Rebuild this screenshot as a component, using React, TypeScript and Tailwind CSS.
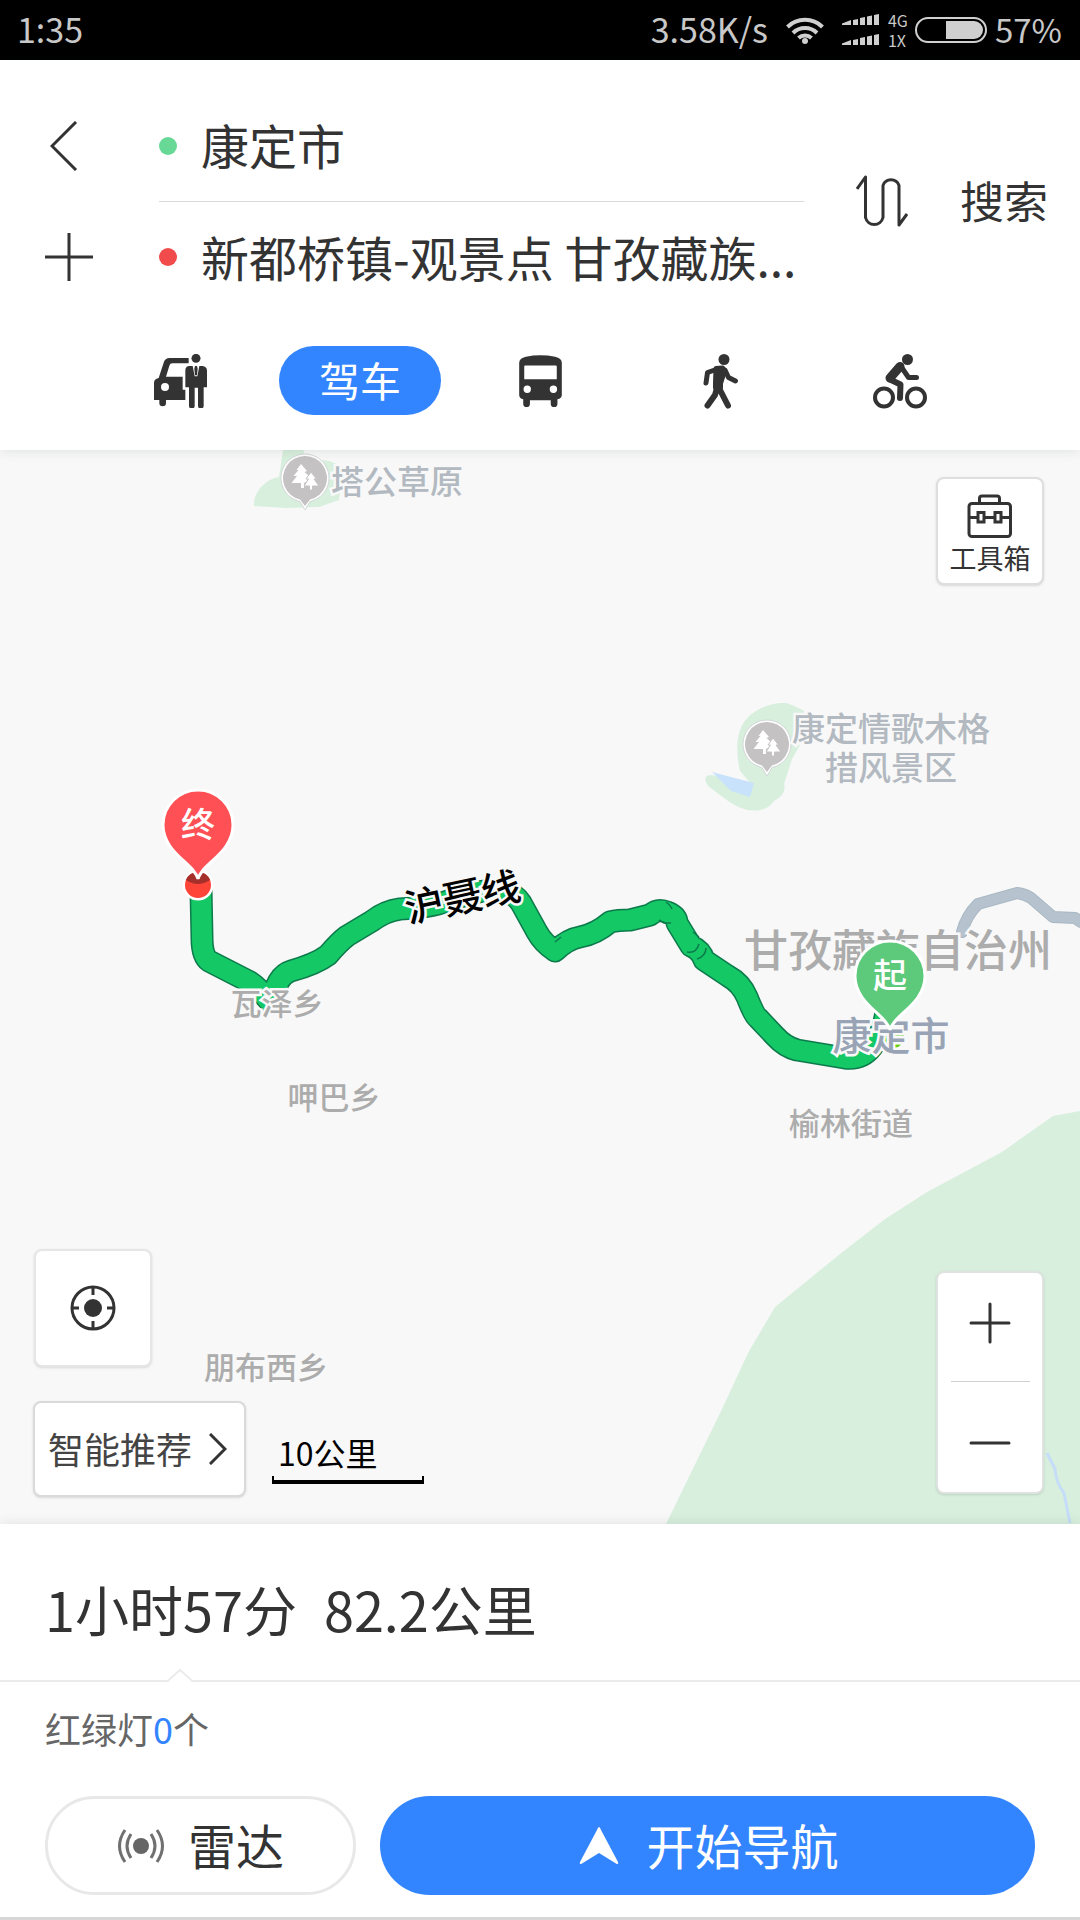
import type { ReactNode } from "react";

const INK = "#333333";

function StatusBar() {
  return (
    <div className="flex h-[60px] items-center bg-black pr-[18px] pl-[17px] text-[34px] leading-none text-[#c8c8c8]">
      <span className="flex-1 pb-[2px]">1:35</span>
      <span className="pb-[2px]">3.58K/s</span>
      <svg className="ml-[18px] h-[28px] w-[38px]" viewBox="0 0 38 28" fill="none" stroke="#cfcfcf" strokeWidth="4">
        <path d="M1.5 11a25 25 0 0 1 35 0" />
        <path d="M7 17a17 17 0 0 1 24 0" />
        <path d="M12.500 22a9.500 9.500 0 0 1 13 0" />
        <circle cx="19" cy="25" r="3" fill="#cfcfcf" stroke="none" />
      </svg>
      <svg className="ml-[18px] h-[32px] w-[38px]" viewBox="0 0 38 32" fill="#cfcfcf">
        {[0, 20].map((y) => (
          <g key={y} transform={`translate(0 ${y})`}>
            <path d="M0 11V9.500L9 6v5zM11 11V6l5-1v6zM18 11V4l5-1v8zM25 11V2.500l5-1v9.500zM32 11V1l5-1v11z" />
          </g>
        ))}
      </svg>
      <div className="ml-2 flex w-[27px] flex-col gap-1 text-[16px] leading-4">
        <span>4G</span>
        <span>1X</span>
      </div>
      <svg className="h-[26px] w-[72px]" viewBox="0 0 72 26">
        <rect x="1" y="1" width="70" height="24" rx="12" fill="none" stroke="#cfcfcf" strokeWidth="2" />
        <path d="M31 4h28a9 9 0 0 1 0 18H31z" fill="#cfcfcf" />
      </svg>
      <span className="ml-[8px] pb-[2px] text-[33px]">57%</span>
    </div>
  );
}

function CarPersonIcon() {
  return (
    <svg className="h-[54px] w-[53px]" viewBox="159 102 159 162" fill={INK}>
      <path d="M263 114v16h-49q-7 0-9 7l-10 33h50v39h8v31h-58v9a10 10 0 0 1-20 0v-9h-16v-52q0-11 14-14l15-46q4-14 18-14z" />
      <circle cx="192" cy="201" r="12" fill="#fff" />
      <circle cx="285" cy="115" r="13.500" />
      <path d="M263 138h12l6 31h8l6-31h9q14 2 14 14v50h-10v55a8 8 0 0 1-17 0v-54h-10v54a8 8 0 0 1-17 0v-55h-11v-50q0-12 10-14z" />
      <path d="M282 138h6l2 8-2 20h-6l-2-20z" />
    </svg>
  );
}

function BusIcon() {
  return (
    <svg className="h-[52px] w-[43px]" viewBox="1257 105 127 155" fill={INK} fillRule="evenodd">
      <path d="M1257 128q0-14 20-18q43-8 87 0q20 4 20 18v96q0 10-13 13v13a10 10 0 0 1-20 0v-10h-62v10a10 10 0 0 1-20 0v-13q-12-3-12-13zM1272 139q0-3 3-3h91q3 0 3 3v38h-97zM1270 207a11 11 0 1 0 22 0a11 11 0 1 0-22 0zM1348 207a11 11 0 1 0 22 0a11 11 0 1 0-22 0z" />
    </svg>
  );
}

function WalkIcon() {
  return (
    <svg className="h-[60px] w-[60px]" viewBox="690 351 60 60" fill="none" stroke={INK} strokeLinecap="round" strokeLinejoin="round">
      <circle cx="724" cy="359.500" r="5.500" fill={INK} stroke="none" />
      <path d="M719 368.500l-11.500 4L706 383M725 370l3.500 7.500 7 3.500" strokeWidth="5" />
      <path d="M716 368.500l6.500-.5 2 3-4 12.500v4h-5v-5z" fill={INK} strokeWidth="5" />
      <path d="M717 388l-2 7-7.500 10.500M719 388l9 17.500" strokeWidth="6" />
    </svg>
  );
}

function BikeIcon() {
  return (
    <svg className="h-[60px] w-[60px]" viewBox="870 351 60 60" fill="none" stroke={INK} strokeLinecap="round" strokeLinejoin="round">
      <circle cx="907.500" cy="359.500" r="5.500" fill={INK} stroke="none" />
      <circle cx="884" cy="397.500" r="9" strokeWidth="4" />
      <circle cx="916" cy="397.500" r="9" strokeWidth="4" />
      <path d="M900 366.500l-10 11.500" strokeWidth="9" />
      <path d="M902 368l6.500 9.500h8" strokeWidth="5" />
      <path d="M890 379.500l10.500 5-.5 13.500" strokeWidth="6" />
    </svg>
  );
}

function Tab({ label, children }: { label: string; children: ReactNode }) {
  return (
    <button aria-label={label} className="flex h-[69px] items-center justify-center">
      {children}
    </button>
  );
}

function Header() {
  return (
    <header className="relative z-10 bg-white shadow-[0_0_12px_rgba(0,40,20,0.13)]">
      <div className="flex items-center pt-[36px]">
        <div className="flex w-[159px] flex-col">
          <button aria-label="返回" className="flex h-[100px] items-center pl-[50px]">
            <svg className="h-[50px] w-[28px]" viewBox="0 0 28 50" fill="none" stroke={INK} strokeWidth="3">
              <path d="M26 1L2 25l24 24" />
            </svg>
          </button>
          <button aria-label="添加途经点" className="flex h-[122px] items-center pl-[45px]">
            <svg className="h-[48px] w-[48px]" viewBox="0 0 48 48" stroke={INK} strokeWidth="3">
              <path d="M24 0v48M0 24h48" />
            </svg>
          </button>
        </div>
        <div className="min-w-0 flex-1 text-[48px] leading-[60px] text-[#333333]">
          <button className="flex h-[106px] w-full items-center border-b border-[#d9d9d9] pb-[6px] text-left">
            <span className="mr-[24px] size-[18px] shrink-0 rounded-full bg-[#67d895]" />
            <span className="pb-[3px] whitespace-nowrap">康定市</span>
          </button>
          <button className="flex h-[116px] w-full items-center pb-[6px] text-left">
            <span className="mr-[24px] size-[18px] shrink-0 rounded-full bg-[#f24b4b]" />
            <span className="pb-[3px] whitespace-nowrap">新都桥镇-观景点 甘孜藏族...</span>
          </button>
        </div>
        <button aria-label="交换起终点" className="mb-[12px] ml-[52px]">
          <svg className="h-[52px] w-[52px]" viewBox="0 0 52 52" fill="none" stroke={INK} strokeWidth="3" strokeLinejoin="round">
            <path d="M1 14L9.500 2v40.500a9 9 0 0 0 17.500 0V10.500a8.500 8.500 0 0 1 16 0V50L51 39" />
          </svg>
        </button>
        <button className="mr-[32px] mb-[14px] ml-[52px] text-[44px] leading-[60px] text-[#333333]">搜索</button>
      </div>
      <nav className="grid grid-cols-5 px-[90px] pt-[28px] pb-[35px]">
        <Tab label="打车"><CarPersonIcon /></Tab>
        <Tab label="驾车">
          <span className="flex h-[69px] w-[162px] shrink-0 items-center justify-center rounded-full bg-[#3385ff] pb-[2px] text-[41px] leading-none text-white">
            驾车
          </span>
        </Tab>
        <Tab label="公交"><BusIcon /></Tab>
        <Tab label="步行"><WalkIcon /></Tab>
        <Tab label="骑行"><BikeIcon /></Tab>
      </nav>
    </header>
  );
}

const ROUTE =
  "M201 890L202 938Q202 956 209 961L250 982Q258 987 269 1001L279 981Q284 973 291 971Q316 964 328 955Q339 942 347 936L372 921Q385 911 400 909Q430 907 445 902Q480 889 500 890Q514 892 521 903L537 932Q543 943 555 951Q568 939 580 937Q596 934 610 922Q618 920 630 920L650 915Q658 908 667 912Q677 916 677 923L691 946Q701 950 704 960L728 976Q741 983 747 997Q755 1017 758 1018L775 1036Q785 1047 797 1050L845 1058Q862 1060 872 1047Q880 1037 884 1022L888 1004";

function TreePin({ className }: { className: string }) {
  return (
    <svg className={className} viewBox="-25 -25 50 58">
      <path d="M0 32L-5 23.500A24 24 0 1 1 5 23.500z" fill="#fff" stroke="#d4d6d8" strokeWidth="1" />
      <path d="M0 28L-5 21.500A22 22 0 1 1 5 21.500z" fill="#c4c2c2" />
      <path d="M-4-14L2-7-.5-6 5-1 1 4-1 5v5h-3V5h-9.500l5.500-7h-3.500l5-6h-2z" fill="#fff" />
      <path d="M6-6l5.500 7H9l5 7H7.500v4h-3V8H-1l4.500-7H1z" fill="#fff" stroke="#c4c2c2" strokeWidth="1" />
    </svg>
  );
}

function RoutePin({ label, fill, className }: { label: string; fill: string; className: string }) {
  return (
    <div className={className}>
      <svg className="absolute inset-0" viewBox="-38 -38 76 94">
        <path
          d="M0 54C-3 39-35 28-35 0A35 35 0 1 1 35 0C35 28 3 39 0 54Z"
          fill={fill}
          stroke="#fff"
          strokeWidth="3"
        />
      </svg>
      <span className="relative text-[34px] leading-none font-medium text-white">{label}</span>
    </div>
  );
}

function MapLabel({ className, children }: { className: string; children: ReactNode }) {
  return (
    <span
      className={`absolute -translate-x-1/2 -translate-y-1/2 text-center font-medium whitespace-nowrap [-webkit-text-stroke:5px_#f8f8f8] [paint-order:stroke_fill] ${className}`}
    >
      {children}
    </span>
  );
}

function MapCanvas() {
  return (
    <div className="absolute top-0 left-1/2 h-[1074px] w-[1080px] -translate-x-1/2">
      <svg className="absolute inset-0" viewBox="0 450 1080 1074" fill="none">
        <path d="M283 450h21l-1 8 26 3 14 5-4 34-20 7-33 1-32-2q-1-10 8-20 8-8 17-9z" fill="#d8efde" />
        <path d="M786 703q8 2 30 14l-24 42-8 25q3 10-10 17-6 8-14 9-15 3-32-9l-20-15q-7-11 4-11l40 10-12-14q-10-45 16-60 14-9 30-8z" fill="#d8efde" />
        <path d="M712 772l42 11-4 14-19-6z" fill="#c9e2fb" />
        <path d="M1080 1111l-27 5-51 36-75 40-42 27-45 35-65 53-27 46-25 54-57 117h414z" fill="#d8efde" />
        <path d="M1047 1453l8 16q1 14 9 24l6 30" stroke="#c5ddf8" strokeWidth="3" />
        <path d="M962 932q4-16 16-28l39-11q8 1 14 5l22 19 22 1 6 4" stroke="#a9b8c4" strokeWidth="12" strokeLinecap="round" strokeLinejoin="round" />
        <path d="M962 932q4-16 16-28l39-11q8 1 14 5l22 19 22 1 6 4" stroke="#b6c3ce" strokeWidth="10" strokeLinecap="round" strokeLinejoin="round" />
        <path d={ROUTE} stroke="#0c7a4b" strokeWidth="23" strokeLinejoin="round" />
        <path d={ROUTE} stroke="#14c866" strokeWidth="20" strokeLinejoin="round" />
        <path d="M666 902q5 4 6 7M659 920l5 3h7M687 952q9 2 12-8M697 959q9-3 9-11M555 942l6-5M693 932l6 5" stroke="#0c7a4b" strokeWidth="1.500" />
        <circle cx="198" cy="885" r="15.500" fill="#fff" />
        <circle cx="198" cy="885" r="13" fill="#ff4438" />
        <path d="M186 880a13 13 0 0 1 24 0q-12 8-24 0z" fill="#a52f2b" />
        <circle cx="891" cy="1036" r="13" fill="#5fce13" />
        <path d="M879 1031a13 13 0 0 1 24 0q-12 8-24 0z" fill="#36713f" />
      </svg>
      <TreePin className="absolute top-[3px] left-[280px] h-[58px] w-[50px]" />
      <TreePin className="absolute top-[269px] left-[742px] h-[58px] w-[50px]" />
      <MapLabel className="top-[30px] left-[397px] text-[33px] leading-none text-[#b2b9c0]">塔公草原</MapLabel>
      <MapLabel className="top-[297px] left-[891px] text-[33px] leading-[39px] text-[#b2b9c0]">
        康定情歌木格
        <br />
        措风景区
      </MapLabel>
      <MapLabel className="top-[445px] left-[462px] -rotate-12 text-[39px] leading-none text-black">沪聂线</MapLabel>
      <MapLabel className="top-[498px] left-[898px] text-[44px] leading-none text-[#acacac]">甘孜藏族自治州</MapLabel>
      <MapLabel className="top-[583px] left-[891px] text-[39px] leading-none text-[#98a4b5] [-webkit-text-stroke:3px_#f8f8f8]">康定市</MapLabel>
      <MapLabel className="top-[551px] left-[277px] text-[31px] leading-none text-[#acacac]">瓦泽乡</MapLabel>
      <MapLabel className="top-[645px] left-[334px] text-[31px] leading-none text-[#acacac]">呷巴乡</MapLabel>
      <MapLabel className="top-[671px] left-[851px] text-[31px] leading-none text-[#acacac]">榆林街道</MapLabel>
      <MapLabel className="top-[915px] left-[266px] text-[31px] leading-none text-[#acacac]">朋布西乡</MapLabel>
      <RoutePin
        label="终"
        fill="#ff5155"
        className="absolute top-[337px] left-[160px] flex h-[94px] w-[76px] justify-center pt-[19px]"
      />
      <RoutePin
        label="起"
        fill="#5dc97b"
        className="absolute top-[488px] left-[852px] flex h-[94px] w-[76px] justify-center pt-[19px]"
      />
    </div>
  );
}

function MapArea() {
  return (
    <main className="relative flex min-h-[900px] flex-1 flex-col justify-between overflow-hidden bg-[#f8f8f8]">
      <MapCanvas />
      <div className="relative flex justify-end pt-[27px] pr-[36px]">
        <button className="flex h-[108px] w-[108px] flex-col items-center rounded-lg border-2 border-[#dedede] bg-white pt-[15px] text-[27px] leading-[40px] text-[#333333] shadow-sm">
          <svg className="h-[44px] w-[46px] shrink-0" viewBox="967 494 46 44" fill="none" stroke={INK} strokeWidth="3">
            <rect x="969" y="503.500" width="41.500" height="33" rx="3" />
            <path d="M979.500 503v-4.500q0-2.500 2.500-2.500h15q2.500 0 2.500 2.500v4.500M969 517.500h9M984.500 517.500h10.500M1001.500 517.500h9" />
            <path d="M978 512.500h6v9.500h-6zM995 512.500h6v9.500h-6z" />
          </svg>
          工具箱
        </button>
      </div>
      <div className="relative flex items-end justify-between pr-[36px] pb-[27px] pl-[33px]">
        <div className="flex flex-col gap-[34px]">
          <button aria-label="定位" className="ml-[1px] flex size-[118px] items-center justify-center rounded-lg border-2 border-[#e6e6e6] bg-white shadow-sm">
            <svg className="size-[46px]" viewBox="0 0 46 46" fill="none" stroke={INK} strokeWidth="3">
              <circle cx="23" cy="23" r="21" />
              <circle cx="23" cy="23" r="9" fill={INK} stroke="none" />
              <path d="M23 1v9M23 36v9M1 23h8M37 23h8" />
            </svg>
          </button>
          <div className="flex items-end gap-[26px]">
            <button className="flex h-[96px] w-[213px] items-center justify-between rounded-lg border-2 border-[#dadada] bg-white pr-[17px] pl-[13px] text-[36px] leading-none text-[#444444] shadow-sm">
              <span className="pb-[3px]">智能推荐</span>
              <svg className="h-[32px] w-[18px]" viewBox="0 0 18 32" fill="none" stroke={INK} strokeWidth="3">
                <path d="M1 1l15 15L1 31" />
              </svg>
            </button>
            <div className="mb-[13px] w-[152px] text-[32px] leading-none text-black">
              <span className="ml-[6px] block pb-[8px] [-webkit-text-stroke:4px_#f8f8f8] [paint-order:stroke_fill]">10公里</span>
              <div className="h-[8px] border-x-2 border-b-4 border-black" />
            </div>
          </div>
        </div>
        <div className="mb-[3px] flex w-[108px] flex-col items-center rounded-lg border-2 border-[#dfe3df] bg-white shadow-sm">
          <button aria-label="放大" className="flex h-[108px] w-full items-center justify-center pb-2">
            <svg className="size-[42px]" viewBox="0 0 42 42" stroke={INK} strokeWidth="3" strokeLinecap="round">
              <path d="M21 2v38M2 21h38" />
            </svg>
          </button>
          <div className="h-px w-[79px] bg-[#d0d0d0]" />
          <button aria-label="缩小" className="flex h-[110px] w-full items-center justify-center pt-3">
            <svg className="size-[42px]" viewBox="0 0 42 42" stroke={INK} strokeWidth="3" strokeLinecap="round">
              <path d="M2 21h38" />
            </svg>
          </button>
        </div>
      </div>
    </main>
  );
}

function RoutePanel() {
  return (
    <section className="relative z-10 border-b-3 border-[#d6d6d6] bg-white shadow-[0_0_12px_rgba(0,0,0,0.1)]">
      <h1 className="flex h-[156px] items-center gap-[27px] px-[45px] pt-[14px] text-[54px] leading-none font-normal text-[#333333]">
        <span>1小时57分</span>
        <span>82.2公里</span>
      </h1>
      <div className="relative border-t-2 border-[#ebebeb]">
        <svg className="absolute -top-[13px] left-[167px] h-[14px] w-[26px]" viewBox="0 0 26 14">
          <path d="M0 14L13 1l13 13z" fill="#fff" />
          <path d="M0 12.500L13 1l13 11.500" fill="none" stroke="#ebebeb" strokeWidth="2" />
        </svg>
        <p className="px-[45px] pt-[22px] text-[36px] leading-[48px] text-[#666666]">
          红绿灯<span className="text-[#3385ff]">0</span>个
        </p>
      </div>
      <div className="flex gap-6 px-[45px] pt-[44px] pb-[22px] text-[48px] leading-none">
        <button className="flex h-[99px] w-[311px] items-center justify-center gap-[23px] rounded-full border-3 border-[#e8e8e8] text-[#333333]">
          <svg className="h-[36px] w-[48px]" viewBox="0 0 48 36" fill="none" stroke="#707070" strokeWidth="3">
            <circle cx="24" cy="18" r="8" fill="#666666" stroke="none" />
            <path d="M14 6q-8 12 0 24M34 6q8 12 0 24M8 2q-11 16 0 32M40 2q11 16 0 32" />
          </svg>
          <span className="pb-1">雷达</span>
        </button>
        <button className="flex h-[99px] flex-1 items-center justify-center gap-[27px] rounded-full bg-[#3385ff] pl-[3px] text-white">
          <svg className="h-[38px] w-[40px]" viewBox="0 0 40 38" fill="#fff">
            <path d="M20 0q1 0 2 3l17 32q1 3-2 1.500L20 26 3 36.500Q0 38 1 35L18 3q1-3 2-3z" />
          </svg>
          <span className="pb-1">开始导航</span>
        </button>
      </div>
    </section>
  );
}

export default function App() {
  return (
    <div lang="zh-CN" className="flex min-h-screen flex-col bg-white font-['Noto_Sans_CJK_SC',sans-serif]">
      <StatusBar />
      <Header />
      <MapArea />
      <RoutePanel />
    </div>
  );
}
